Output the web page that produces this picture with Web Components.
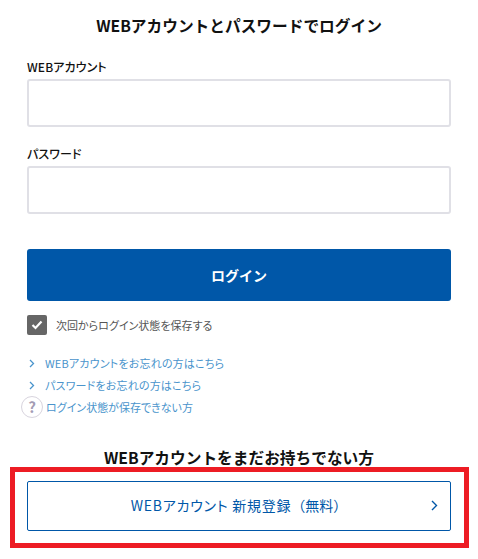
<!DOCTYPE html>
<html lang="ja">
<head>
<meta charset="utf-8">
<title>ログイン</title>
<style>
  body {
    margin: 0;
    background: #fff;
    font-family: "Noto Sans CJK JP", "Noto Sans", sans-serif;
    color: #111;
  }
</style>
</head>
<body>
<login-page></login-page>
<script>
class LoginField extends HTMLElement {
  constructor() {
    super();
    this.attachShadow({ mode: 'open' });
  }

  connectedCallback() {
    this.shadowRoot.innerHTML = `
      <style>
        :host { display: block; }
        label { display: block; font-size: 12px; font-weight: 500; line-height: 18px; margin-bottom: 3px; letter-spacing: .1px; font-feature-settings: "palt"; }
        input { display: block; box-sizing: border-box; width: 100%; height: 48px; border: 2px solid #e0e0e6; border-radius: 3px; background: #fff; }
      </style>
      <label><slot></slot></label>
      <input type="${this.getAttribute('type') || 'text'}">
    `;
  }
}

class LoginCheck extends HTMLElement {
  constructor() {
    super();
    this.attachShadow({ mode: 'open' });
  }

  connectedCallback() {
    this.shadowRoot.innerHTML = `
      <style>
        :host { display: flex; align-items: center; gap: 9px; font-size: 11px; color: #555; font-feature-settings: "palt"; }
        .box { width: 20px; height: 20px; border-radius: 2px; background: #666; display: flex; align-items: center; justify-content: center; }
      </style>
      <span class="box">
        <svg width="12" height="10" viewBox="0 0 12 10"><path d="M1.5 5 L4.5 8 L10.5 1.5" fill="none" stroke="#fff" stroke-width="2.2"/></svg>
      </span>
      <slot></slot>
    `;
  }
}

class LoginLink extends HTMLElement {
  constructor() {
    super();
    this.attachShadow({ mode: 'open' });
  }

  connectedCallback() {
    const help = this.hasAttribute('help');
    this.shadowRoot.innerHTML = `
      <style>
        :host { display: flex; align-items: center; height: 22px; font-size: 11px; color: #4a94cc; font-feature-settings: "palt"; letter-spacing: ${help ? 0 : '.18px'}; }
        .arrow { width: 16px; margin-left: 2px; display: flex; }
        .help { box-sizing: border-box; width: 22px; height: 22px; margin-left: -6px; margin-right: 3px; border: 1px solid #d8d4de; border-radius: 50%; color: #a49cb4; font-size: 15px; font-weight: 700; line-height: 20px; text-align: center; }
      </style>
      ${help
        ? '<span class="help">?</span>'
        : '<span class="arrow"><svg width="6" height="9" viewBox="0 0 6 9"><path d="M1 1 L4.5 4.5 L1 8" fill="none" stroke="#4a94cc" stroke-width="1.3"/></svg></span>'}
      <slot></slot>
    `;
  }
}

class LoginPage extends HTMLElement {
  constructor() {
    super();
    this.attachShadow({ mode: 'open' });
  }

  connectedCallback() {
    this.shadowRoot.innerHTML = `
      <style>
        :host { display: block; }
        h2 { margin: 0; font-size: 15.7px; font-weight: 700; text-align: center; line-height: 24px; }
        .top { padding: 14px 27px 0; }
        .fields { display: grid; gap: 18px; margin-top: 20px; }
        .submit { display: block; width: 100%; height: 52px; margin-top: 35px; border: 0; border-radius: 3px; background: #0057a8; color: #fff; font: inherit; font-size: 14px; font-weight: 700; }
        login-check { margin-top: 14px; }
        .links { margin-top: 17px; }
        .bottom { margin-top: 28px; }
        .outlined { margin: -3px 9px 0 10px; border: 5px solid #ed1c24; padding: 9px 13px 12px 12px; }
        .register { display: flex; align-items: center; justify-content: center; position: relative; height: 50px; box-sizing: border-box; padding-bottom: 2px; border: 1px solid #0057a8; border-radius: 2px; color: #0057a8; font-size: 14px; letter-spacing: .75px; font-feature-settings: "palt"; }
        .register svg { position: absolute; right: 12px; top: 18px; }
        .paren { font-feature-settings: normal; letter-spacing: 0; }
      </style>
      <div class="top">
        <h2>WEBアカウントとパスワードでログイン</h2>
        <div class="fields">
          <login-field>WEBアカウント</login-field>
          <login-field type="password">パスワード</login-field>
        </div>
        <button class="submit">ログイン</button>
        <login-check>次回からログイン状態を保存する</login-check>
        <div class="links">
          <login-link>WEBアカウントをお忘れの方はこちら</login-link>
          <login-link>パスワードをお忘れの方はこちら</login-link>
          <login-link help>ログイン状態が保存できない方</login-link>
        </div>
      </div>
      <div class="bottom">
        <h2>WEBアカウントをまだお持ちでない方</h2>
        <div class="outlined">
          <div class="register"><span>WEBアカウント 新規登録<span class="paren">（無料）</span></span>
            <svg width="7" height="11" viewBox="0 0 7 11"><path d="M1 1 L5.5 5.5 L1 10" fill="none" stroke="#0057a8" stroke-width="1.4"/></svg>
          </div>
        </div>
      </div>
    `;
  }
}

customElements.define('login-field', LoginField);
customElements.define('login-check', LoginCheck);
customElements.define('login-link', LoginLink);
customElements.define('login-page', LoginPage);
</script>
</body>
</html>
